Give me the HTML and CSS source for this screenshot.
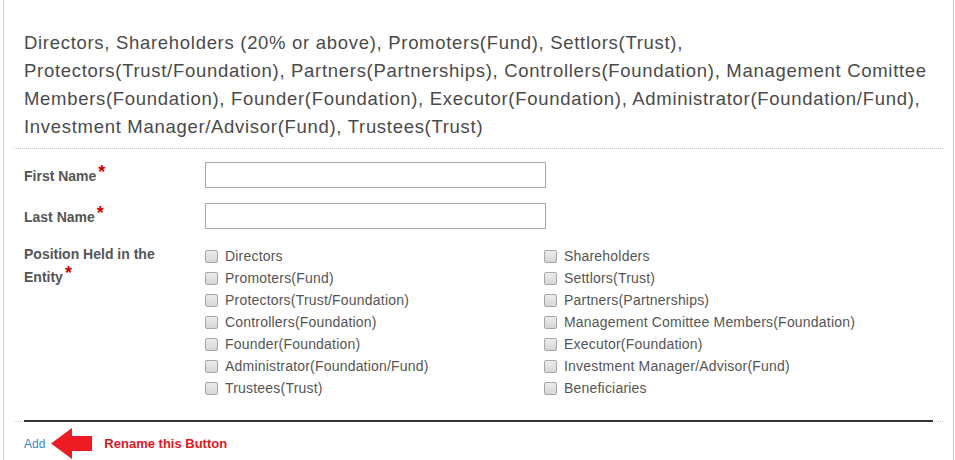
FILE: index.html
```html
<!DOCTYPE html>
<html lang="en">
<head>
  <meta charset="UTF-8">
  <title>Entity Related Persons</title>
  <link rel="stylesheet" href="styles.css">
</head>
<body>

  <div class="panel">

    <p class="intro">Directors, Shareholders (20% or above), Promoters(Fund), Settlors(Trust), Protectors(Trust/Foundation), Partners(Partnerships), Controllers(Foundation), Management Comittee Members(Foundation), Founder(Foundation), Executor(Foundation), Administrator(Foundation/Fund), Investment Manager/Advisor(Fund), Trustees(Trust)</p>

    <div class="form">

      <!-- names -->
      <div class="row row-input">
        <label class="label" for="firstName">First Name<span class="req">*</span></label>
        <input class="text" id="firstName" type="text">
      </div>
      <div class="row row-input">
        <label class="label" for="lastName">Last Name<span class="req">*</span></label>
        <input class="text" id="lastName" type="text">
      </div>

      <!-- positions -->
      <div class="row row-checks">
        <label class="label">Position Held in the<br>Entity<span class="req">*</span></label>
        <div class="checks">
          <label class="check"><input type="checkbox"> Directors</label>
          <label class="check"><input type="checkbox"> Shareholders</label>
          <label class="check"><input type="checkbox"> Promoters(Fund)</label>
          <label class="check"><input type="checkbox"> Settlors(Trust)</label>
          <label class="check"><input type="checkbox"> Protectors(Trust/Foundation)</label>
          <label class="check"><input type="checkbox"> Partners(Partnerships)</label>
          <label class="check"><input type="checkbox"> Controllers(Foundation)</label>
          <label class="check"><input type="checkbox"> Management Comittee Members(Foundation)</label>
          <label class="check"><input type="checkbox"> Founder(Foundation)</label>
          <label class="check"><input type="checkbox"> Executor(Foundation)</label>
          <label class="check"><input type="checkbox"> Administrator(Foundation/Fund)</label>
          <label class="check"><input type="checkbox"> Investment Manager/Advisor(Fund)</label>
          <label class="check"><input type="checkbox"> Trustees(Trust)</label>
          <label class="check"><input type="checkbox"> Beneficiaries</label>
        </div>
      </div>

      <div class="rule"></div>
    </div>

    <div class="actions">
      <a class="add" href="#">Add</a>
      <svg class="arrow" width="42" height="31" viewBox="0 0 42 31">
        <polygon points="0,15.5 21,0 21,8 41,8 41,23 21,23 21,31" fill="#ed1c24"/>
      </svg>
      <span class="note">Rename this Button</span>
    </div>

  </div>

</body>
</html>
```

FILE: styles.css
```css
body {
  margin: 0;
  background: #fff;
  font-family: "Liberation Sans", Arial, sans-serif;
  color: #555;
}
.panel {
  margin-left: 3px;
  width: 949px;
  height: 460px;
  border-left: 1px solid #d0d0d0;
  border-right: 1px solid #c8c8c8;
}
.intro {
  margin: 0;
  padding: 29px 20px 7px;
  font-size: 18.5px;
  letter-spacing: 0.7px;
  line-height: 28px;
  color: #4a4a4a;
}
.form {
  margin: 0 10px;
  padding: 0 10px;
  border-top: 1px dotted #c4c4c4;
  border-bottom: 1px dotted #c4c4c4;
}
.row {
  display: flex;
}
.row-input {
  align-items: center;
  height: 26px;
  margin-top: 13px;
}
.row-input + .row-input {
  margin-top: 15px;
}
.row-checks {
  margin-top: 14px;
}
.label {
  width: 165px;
  padding-right: 16px;
  font-size: 14px;
  font-weight: bold;
  line-height: 22px;
  color: #555;
}
.req {
  color: #c00;
  font-size: 18px;
  position: relative;
  top: -3px;
  margin-left: 2px;
}
.text {
  box-sizing: border-box;
  width: 341px;
  height: 26px;
  margin: 0;
  border: 1px solid #aaa;
  padding: 2px 6px;
  font: inherit;
}
.checks {
  display: grid;
  grid-template-columns: 339px 339px;
  grid-auto-rows: 22px;
  margin-top: 2px;
}
.check {
  display: flex;
  align-items: center;
  font-size: 14px;
  letter-spacing: 0.2px;
  color: #555;
  white-space: nowrap;
}
.check input {
  appearance: none;
  box-sizing: border-box;
  width: 13px;
  height: 13px;
  margin: 0 7px 0 0;
  border: 1px solid #a6a6a6;
  border-radius: 2px;
  background: linear-gradient(#ececec, #d6d6d6);
}
.rule {
  height: 2px;
  margin-top: 21px;
  margin-bottom: -1px;
  background: #333;
}
.actions {
  display: flex;
  align-items: center;
  padding: 6px 20px 0;
  height: 31px;
}
.add {
  font-size: 12px;
  color: #3a87c8;
  text-decoration: none;
}
.arrow {
  display: block;
  margin-left: 6px;
}
.note {
  margin-left: 11px;
  font-size: 13px;
  font-weight: bold;
  color: #e3141e;
}
```
